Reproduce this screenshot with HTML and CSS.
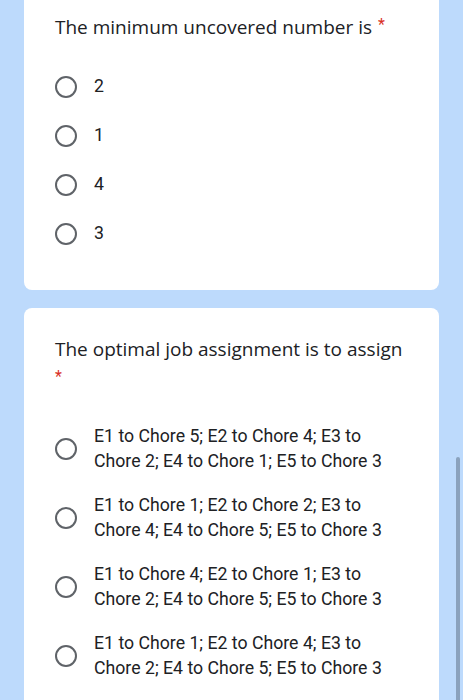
FILE: index.html
```html
<!DOCTYPE html>
<html>
<head>
<meta charset="utf-8">
<link rel="stylesheet" href="styles.css">
</head>
<body>
<div class="page">
  <section class="card card-first">
    <div class="title">The minimum uncovered number is<span class="req">*</span></div>
    <div class="options">
      <div class="opt"><span class="radio"></span><span class="label">2</span></div>
      <div class="opt"><span class="radio"></span><span class="label">1</span></div>
      <div class="opt"><span class="radio"></span><span class="label">4</span></div>
      <div class="opt"><span class="radio"></span><span class="label">3</span></div>
    </div>
  </section>
  <section class="card card-second">
    <div class="title">The optimal job assignment is to assign <span class="req">*</span></div>
    <div class="options long">
      <div class="opt"><span class="radio"></span><span class="label">E1 to Chore 5; E2 to Chore 4; E3 to Chore 2; E4 to Chore 1; E5 to Chore 3</span></div>
      <div class="opt"><span class="radio"></span><span class="label">E1 to Chore 1; E2 to Chore 2; E3 to Chore 4; E4 to Chore 5; E5 to Chore 3</span></div>
      <div class="opt"><span class="radio"></span><span class="label">E1 to Chore 4; E2 to Chore 1; E3 to Chore 2; E4 to Chore 5; E5 to Chore 3</span></div>
      <div class="opt"><span class="radio"></span><span class="label">E1 to Chore 1; E2 to Chore 4; E3 to Chore 2; E4 to Chore 5; E5 to Chore 3</span></div>
    </div>
  </section>
</div>
<div class="scrollbar"></div>
</body>
</html>
```

FILE: styles.css
```css
html, body {
  margin: 0;
  padding: 0;
}
body {
  background: #bddafc;
  overflow: hidden;
  height: 700px;
  font-family: Roboto, "Liberation Sans", sans-serif;
  color: #202124;
}
.page {
  padding: 0 24px;
  margin-top: -20px;
  display: flex;
  flex-direction: column;
  gap: 18px;
}
.card {
  background: #fff;
  border-radius: 8px;
  padding: 0 24px 0 31px;
}
.card-first {
  padding-top: 31px;
}
.card-second {
  padding-top: 27px;
}
.title {
  font-family: "Open Sans", sans-serif;
  font-size: 19px;
  line-height: 28px;
  color: #202124;
}
.card-second .title {
  padding-right: 6px;
}
.req {
  color: #d93025;
  font-size: 16px;
  margin-left: 6px;
  vertical-align: 4px;
  font-family: Roboto, sans-serif;
}
.card-second .req {
  margin-left: 0;
}
.options {
  display: flex;
  flex-direction: column;
  padding-top: 21px;
  padding-bottom: 32px;
}
.opt {
  display: flex;
  align-items: center;
  gap: 17px;
  height: 49px;
}
.radio {
  flex: none;
  width: 18px;
  height: 18px;
  border: 2.5px solid #5f6368;
  border-radius: 50%;
}
.label {
  font-size: 17.7px;
  line-height: 25px;
  color: #202124;
}
.options.long {
  padding-top: 21px;
}
.long .opt {
  height: 69px;
}
.long .label {
  padding-right: 14px;
}
.scrollbar {
  position: fixed;
  left: 456px;
  top: 457px;
  width: 4px;
  height: 243px;
  background: #8ba2bd;
  border-radius: 2px 2px 0 0;
}
```
